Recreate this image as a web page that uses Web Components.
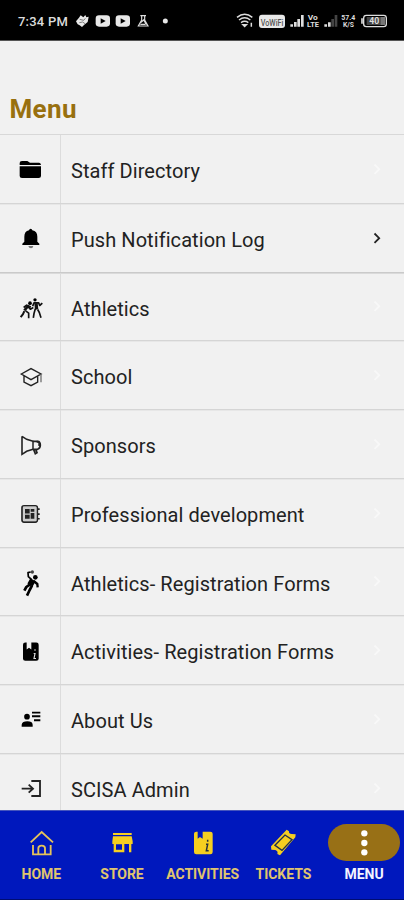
<!DOCTYPE html>
<html lang="en"><head><meta charset="utf-8"><title>Menu</title>
<style>html,body{margin:0;height:100%;overflow:hidden;background:#f1f1f1;font-family:Roboto,"Liberation Sans",sans-serif}</style></head><body>
<app-screen></app-screen>
<script>
const define=(name,markup)=>customElements.define(name,class extends HTMLElement{
  connectedCallback(){ if(!this.shadowRoot) this.attachShadow({mode:'open'}).innerHTML=markup(this); }
});
define('status-bar',()=>`<style>
:host{display:flex;height:41px;background:#000;color:#dcdcdc;box-sizing:border-box;align-items:center;padding-left:18px;font-size:13px;font-weight:500;border-bottom:1px solid #555}
span{width:58px;white-space:nowrap;letter-spacing:.22px;padding-top:2px}
svg{display:block;flex:none}
</style><span>7:34 PM</span>
<svg width="126" height="41" viewBox="228 0 378 123" fill="#e8e8e8"><path d="M228 64l9-11 5-7 8 6 6-7 3 7 7-2-3 16-11 9-6 6-7-5-6-3z"/><path d="M239 58l12 3 5-6M238 68l10-2 7 5" stroke="#444" stroke-width="2" fill="none"/>
<rect x="287" y="46" width="43" height="34" rx="10"/><path d="M302 55l15 8-15 8z" fill="#000"/><rect x="347" y="46" width="43" height="34" rx="10"/><path d="M362 55l15 8-15 8z" fill="#000"/>
<path d="M421 47h17M425 48v12l-10 18h29l-10-18V48M422 68l9-8 8 13M421 73h15" stroke="#ddd" stroke-width="3.5" fill="none"/><circle cx="496" cy="63" r="7.5"/></svg>
<svg width="202" height="41" viewBox="0 0 606 123" fill="none" stroke="#ddd"><g stroke-width="4.5"><path d="M105 52q23-18 46 0M111 60q17-13 34 0M117 68q11-8 22 0"/><path d="M123 74h10l-5 5zM148 68v12"/></g>
<rect x="171" y="44" width="78" height="40" rx="9" fill="#e8e8e8" stroke="none"/><text x="176" y="78" textLength="68" lengthAdjust="spacingAndGlyphs" font-size="29" font-weight="500" fill="#555" stroke="none">VoWiFi</text>
<g stroke-width="8"><path d="M269 80v-7M280 80V66M290 80V57M301 80V45"/><path d="M371 80v-7M382 80V67"/><path d="M392 80V57M402 80V45" stroke="#444"/></g>
<g fill="#ddd" stroke="none" font-size="21" font-weight="700"><text x="317" y="61" textLength="30" lengthAdjust="spacingAndGlyphs">Vo</text><text x="315" y="81" textLength="36" lengthAdjust="spacingAndGlyphs">LTE</text><text x="418" y="61" textLength="42" lengthAdjust="spacingAndGlyphs">57.4</text><text x="423" y="82" textLength="33" lengthAdjust="spacingAndGlyphs">K/S</text></g>
<rect x="485" y="46" width="68" height="34" rx="8" stroke-width="4"/><path d="M480 55v16" stroke-width="5"/><rect x="494" y="51" width="41" height="24" fill="#444" stroke="none"/><rect x="535" y="51" width="14" height="24" fill="#777" stroke="none"/><text x="502" y="72" font-size="25" font-weight="700" fill="#ddd" stroke="none" textLength="30" lengthAdjust="spacingAndGlyphs">40</text></svg>`);

const icons={
folder:['48 222 90 90','<path d="M59 249q0-6 7-6h16l8 5h27q5 0 6 7H59zM59 259h64v29q0 6-7 6H66q-7 0-7-6z"/>'],
bell:['48 53 90 90','<path d="M67 119v-4l6-6V94q0-16 14-19 1-5 5-5t5 5q15 3 15 19v15l6 6v4z"/><path d="M85 122h15q-1 7-7 7t-8-7z" fill="#777"/>'],
wrestle:['48 259.5 90 90','<circle cx="105" cy="283" r="5"/><circle cx="90" cy="293" r="5.5"/><g fill="none" stroke="#111" stroke-linejoin="round"><path d="M62 335l7-9 4-9" stroke-width="6"/><path d="M73 315l11-13 8 4" stroke-width="8"/><path d="M71 306l9-7 11 12 9-5M77 316l9 7v15" stroke-width="5"/><path d="M108 293l2 19" stroke-width="10"/><path d="M98 302l4-10h14l3 8 8-7M106 310l-4 14-2 13M113 312l5 9 5 16" stroke-width="5"/></g>'],
school:['48 61 90 90','<g fill="none" stroke="#222" stroke-width="4.2"><path d="M64 100l29-16 30 16-30 17zM72 105v19l21 11 20-11v-19"/><path d="M123 101v24" stroke="#777"/></g>'],
horn:['48 267 90 90','<g fill="none" stroke="#222"><path d="M66 289v54l14-9 19-6M66 289l14 9 19 6" stroke-width="4.8"/><path d="M99 302v27" stroke-width="4.5"/><path d="M99 304h13q9 1 9 11t-8 13H99M101 329l5 12 5-3-4-10" stroke-width="5"/><path d="M110 305h6q4 6 1 13" stroke-width="6"/></g>'],
board:['48 53.7 90 90','<g fill="none" stroke="#222" stroke-width="5"><rect x="66" y="77" width="46" height="49" rx="6"/><path d="M112 87h7M112 102h7M112 116h7"/></g><rect x="69" y="80" width="40" height="43" fill="#ccc"/><path d="M75 87h14v13H75zM92 87h11v8H92zM75 104h14v12H75zM92 99h11v17H92z" fill="#222"/>'],
handball:['48 260 90 90','<circle cx="97" cy="275" r="5" fill="#444"/><circle cx="106" cy="291" r="7"/><g fill="none" stroke="#000" stroke-linejoin="round"><path d="M92 275l-8 2 1 12 10 9" stroke-width="5"/><path d="M99 298l-9 16" stroke-width="18"/><path d="M101 302l11 9 1 10" stroke-width="7"/><path d="M90 312l-11 8-6 11M96 316l-7 13-8 17" stroke-width="8"/></g>'],
book:['48 46.5 90 90','<path d="M69 73q0-7 7-7h4v21l7-5 7 5V66h15q7 0 7 7v42q0 6-7 6H76q-7 0-7-6z"/><path d="M105 86v5M101 99h4l-3 15h6" fill="none" stroke="#ddd" stroke-width="3.5"/>'],
person:['48 253 90 90','<circle cx="81" cy="291" r="8.5"/><path d="M65 321v-6q2-10 17-10t16 10v6zM96 276h25v5.5H96zM96 287h25v5.5H96zM102 299h19v5.5h-19z"/>'],
login:['48 459 90 90','<g fill="none" stroke="#222" stroke-width="5.5"><path d="M65 506h33M86 494l13 12-13 12M94 483h26v45H94"/></g>'],
home:['78 81 90 90','<g fill="none" stroke="#e5c35a" stroke-width="5.5"><path d="M92 124l33-31 34 31M99 132v28h53v-28M115 161v-19q0-8 10-8t10 8v19"/></g>'],
store:['321 81 90 90','<path d="M339 96h56v6h-56zM339 106h56l3 15v8h-4v25h-7v-25h-14v25h-32v-25h-4v-8zM348 130v16h18v-16z" fill="#f5cf20" fill-rule="evenodd"/>'],
guide:['-42 81 90 90','<path d="M-24 98q0-6 7-6h4v21l7-5 8 5V92h23q7 0 7 6v55q0 7-7 7h-42q-7 0-7-7z" fill="#f5cf20"/><path d="M17 116v6M12 130h5l-4 19h7" fill="none" stroke="#26303a" stroke-width="4.5"/>'],
ticket:['198 81 90 90','<path d="M207 136l47-50 7 5q-1 8 8 8l12 1-1 9-46 54-8-4q3-9-6-12l-12-1z" fill="#f5cf20"/><path d="M219 133l30-31 21 14-30 32z" fill="none" stroke="#20304a" stroke-width="4"/>'],
dots:['441 81 90 90','<g fill="#fff"><circle cx="487" cy="97" r="9.5"/><circle cx="487" cy="126" r="9.5"/><circle cx="487" cy="154" r="9.5"/></g>']};
define('menu-icon',el=>{const [box,art]=icons[el.getAttribute('name')];return `<style>:host{display:block;width:30px;height:30px}svg{display:block}</style><svg width="30" height="30" viewBox="${box}">${art}</svg>`});
define('menu-row',el=>`<style>
:host{display:grid;grid-template-columns:61px 1fr 53px;height:68.75px;box-sizing:border-box;border-bottom:1px solid #d5d5d5;box-shadow:0 1px 0 #e7e7e7}
:host([strong]){border-color:#cacaca;box-shadow:0 1px 0 #dadada}
.i{border-right:1px solid #dcdcdc;display:flex;align-items:center;padding:1px 0 0 16px}
.t{display:flex;align-items:center;padding:4.5px 0 0 10px;font-size:20px;letter-spacing:.07px;color:#222;white-space:nowrap}
.c{display:flex;align-items:center;padding-left:21px}path{fill:none;stroke:#f8f8f8;stroke-width:1.8}:host([strong]) path{stroke:#222}
</style><div class="i"><menu-icon name="${el.getAttribute('icon')}"></menu-icon></div><div class="t"><span><slot></slot></span></div><div class="c"><svg width="10" height="14" viewBox="0 0 10 14"><path d="M2.5 2.5l4.7 4.7-4.7 4.7"/></svg></div>`);
define('nav-tab',el=>`<style>
:host{display:flex;flex-direction:column;align-items:center;color:#e0c56e;font-size:14px;font-weight:700;white-space:nowrap}
.p{width:72px;height:37px;border-radius:19px;display:flex;align-items:center;justify-content:center}
:host([active]){color:#f4f4ff}:host([active]) .p{background:#987016}
span{margin-top:5px;line-height:16px;letter-spacing:-.05px}
</style><div class="p"><menu-icon name="${el.getAttribute('icon')}"></menu-icon></div><span><slot></slot></span>`);
define('nav-bar',()=>`<style>:host{display:grid;grid-template-columns:repeat(5,80.7px);height:90px;box-sizing:border-box;padding:13px 0 0 1px;background:#0018bd;border-top:1px solid #4655bd;border-bottom:1px solid #000d72}</style><slot></slot>`);
define('app-screen',()=>`<style>
:host{display:flex;flex-direction:column;height:900px;width:404px;overflow:hidden}
h1{margin:0;height:94px;box-sizing:border-box;flex:none;padding:52px 0 0 9.5px;font-size:26px;line-height:32px;letter-spacing:.35px;font-weight:700;color:#98700f;border-bottom:1px solid #d8d8d8}
status-bar,nav-bar,menu-row{flex:none}main{flex:1;min-height:0;overflow:hidden}
</style><status-bar></status-bar><h1>Menu</h1><main>
<menu-row icon="folder">Staff Directory</menu-row><menu-row icon="bell" strong>Push Notification Log</menu-row><menu-row icon="wrestle">Athletics</menu-row><menu-row icon="school">School</menu-row><menu-row icon="horn">Sponsors</menu-row><menu-row icon="board">Professional development</menu-row><menu-row icon="handball">Athletics- Registration Forms</menu-row><menu-row icon="book">Activities- Registration Forms</menu-row><menu-row icon="person">About Us</menu-row><menu-row icon="login">SCISA Admin</menu-row></main>
<nav-bar><nav-tab icon="home">HOME</nav-tab><nav-tab icon="store">STORE</nav-tab><nav-tab icon="guide">ACTIVITIES</nav-tab><nav-tab icon="ticket">TICKETS</nav-tab><nav-tab icon="dots" active>MENU</nav-tab></nav-bar>`);
</script></body></html>
